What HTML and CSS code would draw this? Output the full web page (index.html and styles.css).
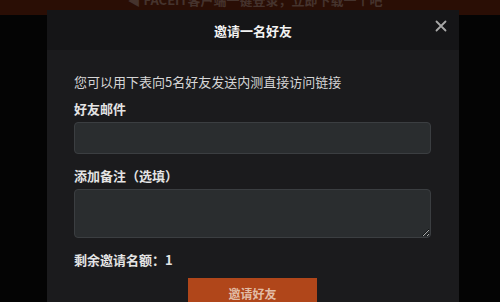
FILE: index.html
```html
<!DOCTYPE html>
<html lang="zh">
<head>
<meta charset="utf-8">
<link rel="stylesheet" href="styles.css">
</head>
<body>
<div class="banner"><span class="banner-text">◀ FACEIT客户端一键登录，立即下载一个吧</span></div>
<div class="modal">
  <div class="modal-header">
    <span class="modal-title">邀请一名好友</span>
    <svg class="close" width="12" height="12" viewBox="0 0 12 12"><path d="M1.5 1.5L10.5 10.5M10.5 1.5L1.5 10.5" stroke="#a8a8a8" stroke-width="1.8" stroke-linecap="round"/></svg>
  </div>
  <div class="modal-body">
    <p class="intro">您可以用下表向5名好友发送内测直接访问链接</p>
    <label class="label">好友邮件</label>
    <input class="field" type="text">
    <label class="label label-gap">添加备注（选填）</label>
    <textarea class="field area"></textarea>
    <p class="label label-gap">剩余邀请名额：1</p>
    <div class="actions"><button class="btn">邀请好友</button></div>
  </div>
</div>
</body>
</html>
```
FILE: styles.css
```css
html, body {
  margin: 0;
  padding: 0;
  background: #040404;
  width: 500px;
  height: 302px;
  overflow: hidden;
  font-family: "Noto Sans CJK SC", "Noto Sans", sans-serif;
}
.banner {
  height: 15px;
  background: #2a0e05;
  overflow: hidden;
  display: flex;
  justify-content: center;
}
.banner-text {
  margin-top: -9px;
  font-size: 13px;
  line-height: 18px;
  color: #45332d;
  font-weight: bold;
  padding-left: 10px;
}
.modal {
  position: absolute;
  left: 47px;
  top: 10px;
  width: 412px;
  height: 300px;
  background: #1b1b1d;
  display: flex;
  flex-direction: column;
}
.modal-header {
  height: 40px;
  flex: none;
  background: #151517;
  display: flex;
  align-items: center;
  justify-content: center;
  position: relative;
}
.modal-title {
  color: #f2f2f2;
  font-size: 13px;
  font-weight: bold;
}
.close {
  position: absolute;
  right: 12px;
  top: 10px;
}
.modal-body {
  padding: 23px 28px 0 27px;
  display: flex;
  flex-direction: column;
}
.intro {
  margin: 0 0 9px;
  font-size: 13px;
  line-height: 18px;
  color: #d6d6d6;
}
.label {
  margin: 0;
  font-size: 13px;
  line-height: 18px;
  font-weight: bold;
  color: #e4e4e4;
  display: block;
}
.label-gap {
  margin-top: 13px;
}
.field {
  margin-top: 4px;
  box-sizing: border-box;
  width: 357px;
  height: 32px;
  background: #2a2d2f;
  border: 1px solid #3b3e41;
  border-radius: 4px;
  outline: none;
  color: #ddd;
  padding: 0 8px;
  font-family: inherit;
}
.area {
  height: 49px;
  resize: vertical;
  display: block;
}
.actions {
  display: flex;
  justify-content: center;
  margin-top: 9px;
}
.btn {
  width: 129px;
  height: 32px;
  background: #b0461a;
  border: none;
  border-radius: 0;
  color: #e2bca6;
  font-family: inherit;
  font-size: 12px;
  font-weight: bold;
  line-height: 32px;
  padding: 0;
}
```
